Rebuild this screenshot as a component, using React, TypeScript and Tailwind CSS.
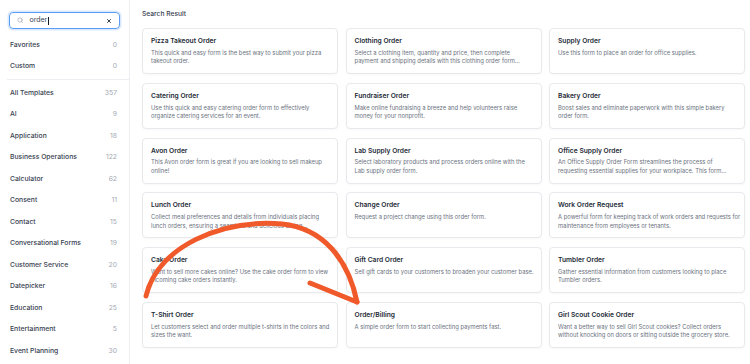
import React from 'react';
import { Search, X } from 'lucide-react';

interface Template {
  title: string;
  lines: string[];
}

const categoriesTop = [
  { name: 'Favorites', count: 0 },
  { name: 'Custom', count: 0 },
];

const categories = [
  { name: 'All Templates', count: 357 },
  { name: 'AI', count: 9 },
  { name: 'Application', count: 18 },
  { name: 'Business Operations', count: 122 },
  { name: 'Calculator', count: 62 },
  { name: 'Consent', count: 11 },
  { name: 'Contact', count: 15 },
  { name: 'Conversational Forms', count: 19 },
  { name: 'Customer Service', count: 20 },
  { name: 'Datepicker', count: 16 },
  { name: 'Education', count: 25 },
  { name: 'Entertainment', count: 5 },
  { name: 'Event Planning', count: 30 },
];

// descriptions are kept as the two lines the card shows
const templates: Template[] = [
  { title: 'Pizza Takeout Order', lines: ['This quick and easy form is the best way to submit your pizza', 'takeout order.'] },
  { title: 'Clothing Order', lines: ['Select a clothing item, quantity and price, then complete', 'payment and shipping details with this clothing order form...'] },
  { title: 'Supply Order', lines: ['Use this form to place an order for office supplies.'] },
  { title: 'Catering Order', lines: ['Use this quick and easy catering order form to effectively', 'organize catering services for an event.'] },
  { title: 'Fundraiser Order', lines: ['Make online fundraising a breeze and help volunteers raise', 'money for your nonprofit.'] },
  { title: 'Bakery Order', lines: ['Boost sales and eliminate paperwork with this simple bakery', 'order form.'] },
  { title: 'Avon Order', lines: ['This Avon order form is great if you are looking to sell makeup', 'online!'] },
  { title: 'Lab Supply Order', lines: ['Select laboratory products and process orders online with the', 'Lab supply order form.'] },
  { title: 'Office Supply Order', lines: ['An Office Supply Order Form streamlines the process of', 'requesting essential supplies for your workplace. This form...'] },
  { title: 'Lunch Order', lines: ['Collect meal preferences and details from individuals placing', 'lunch orders, ensuring a seamless and delicious dining...'] },
  { title: 'Change Order', lines: ['Request a project change using this order form.'] },
  { title: 'Work Order Request', lines: ['A powerful form for keeping track of work orders and requests for', 'maintenance from employees or tenants.'] },
  { title: 'Cake Order', lines: ['Want to sell more cakes online? Use the cake order form to view', 'incoming cake orders instantly.'] },
  { title: 'Gift Card Order', lines: ['Sell gift cards to your customers to broaden your customer base.'] },
  { title: 'Tumbler Order', lines: ['Gather essential information from customers looking to place', 'Tumbler orders.'] },
  { title: 'T-Shirt Order', lines: ['Let customers select and order multiple t-shirts in the colors and', 'sizes the want.'] },
  { title: 'Order/Billing', lines: ['A simple order form to start collecting payments fast.'] },
  { title: 'Girl Scout Cookie Order', lines: ['Want a better way to sell Girl Scout cookies? Collect orders', 'without knocking on doors or sitting outside the grocery store.'] },
];

const CategoryRow: React.FC<{ name: string; count: number }> = ({ name, count }) => (
  <div className="flex h-[21.5px] items-center justify-between pl-[10px] pr-[12px]">
    <span className="text-[6.8px] font-medium text-[#374151]">{name}</span>
    <span className="text-[6.8px] text-[#a3a8b2]">{count}</span>
  </div>
);

const TemplateCard: React.FC<{ template: Template }> = ({ template }) => (
  <div className="h-[46px] overflow-hidden rounded-[4px] border border-[#e7e9ed] bg-white pl-[8px] pr-[3px] pt-[8px] shadow-[0_1px_2px_rgba(0,0,0,0.03)]">
    <div className="text-[6.7px] font-semibold leading-[9px] text-[#232a36]">{template.title}</div>
    <div className="mt-[2.75px] text-[5.85px] leading-[8.5px] text-[#6b7280]">
      {template.lines.map(line => (
        <div key={line} className="whitespace-nowrap">{line}</div>
      ))}
    </div>
  </div>
);

export default function App() {
  return (
    <div className="relative flex h-[364px] w-[750px] overflow-hidden bg-white font-['Inter','Liberation_Sans',sans-serif]">
      {/* Sidebar */}
      <aside className="flex w-[130px] shrink-0 flex-col border-r border-[#eceef1]">
        <div className="mx-[9px] mt-[12px] flex h-[17px] items-center rounded-[4px] border border-[#5b9cf5] pl-[7px] pr-[7px] shadow-[0_0_0_1.5px_#dbe9fd]">
          <Search className="h-[6.5px] w-[6.5px] text-[#9ca3af]" strokeWidth={2.5} />
          <span className="ml-[6px] text-[7px] text-[#374151]">order</span>
          <span className="ml-[0.5px] h-[8px] w-px bg-[#111827]" />
          <X className="ml-auto h-[6px] w-[6px] text-[#374151]" strokeWidth={4} />
        </div>

        <div className="mt-[5px]">
          {categoriesTop.map(c => (
            <CategoryRow key={c.name} name={c.name} count={c.count} />
          ))}
        </div>
        <div className="ml-[7px] mt-[2px] h-px bg-[#eceef1]" />
        <div className="mt-[2px]">
          {categories.map(c => (
            <CategoryRow key={c.name} name={c.name} count={c.count} />
          ))}
        </div>
      </aside>

      {/* Results */}
      <main className="flex-1 pl-[12px] pt-[9px]">
        <h2 className="text-[6.7px] font-medium leading-[10px] text-[#374151]">Search Result</h2>
        <div className="mt-[9px] grid w-[603px] grid-cols-3 gap-x-[7.5px] gap-y-[8.8px]">
          {templates.map(t => (
            <TemplateCard key={t.title} template={t} />
          ))}
        </div>
      </main>

      {/* Hand-drawn arrow annotation */}
      <svg className="pointer-events-none absolute inset-0" width="750" height="364" viewBox="0 0 750 364" fill="none">
        <path
          d="M146 296 C158 246 222 219 282 224 C322 228 348 258 357 302"
          stroke="#f0592a"
          strokeWidth="5"
          strokeLinecap="round"
        />
        <path d="M310 283 L357 302" stroke="#f0592a" strokeWidth="5" strokeLinecap="round" />
      </svg>
    </div>
  );
}
